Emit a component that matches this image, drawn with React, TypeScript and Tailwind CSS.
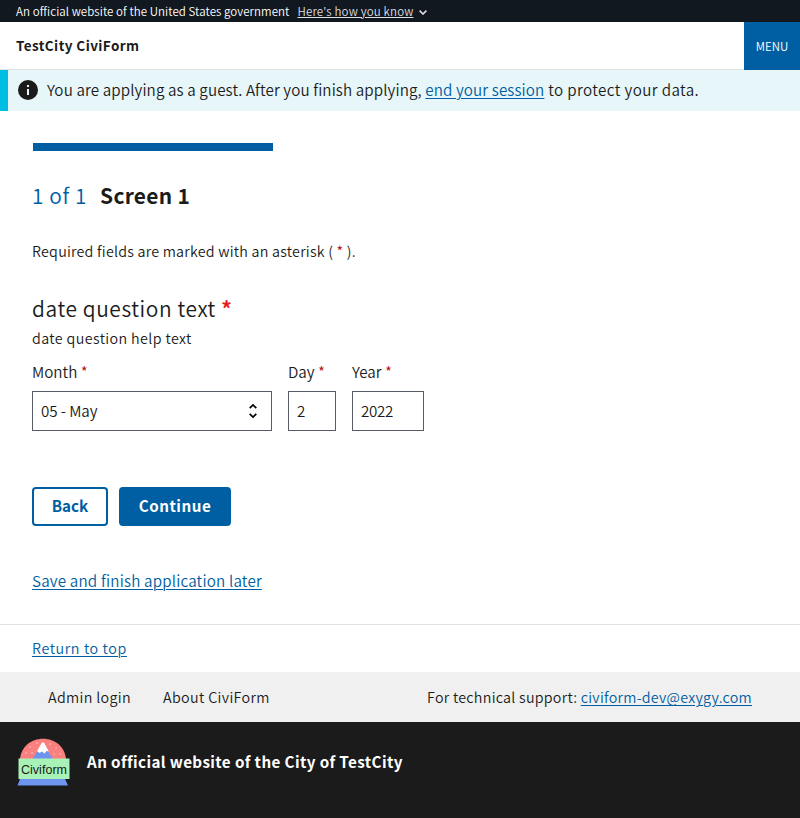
import React from "react";

const link = "text-[#005ea2] underline decoration-1 underline-offset-[2px]";

function Required({ className = "text-[#b50909]" }: { className?: string }) {
  return <span className={className}>*</span>;
}

function Banner() {
  return (
    <div className="flex h-[22px] items-center bg-[#11181f] pb-px pt-[2px] pl-4 text-[11.5px] tracking-[0.07px] text-white">
      <span>An official website of the United States government</span>
      <a
        href="#"
        className="ml-2 tracking-[0.17px] text-[#dcdee0] underline decoration-1 underline-offset-[1px]"
      >
        Here's how you know
      </a>
      <svg className="ml-[6px] mt-[2px] h-[5px] w-2" viewBox="0 0 8 5" fill="none" stroke="#dcdee0" strokeWidth="1.6">
        <path d="M.6.6 4 4 7.4.6" />
      </svg>
    </div>
  );
}

function Header() {
  return (
    <header className="flex h-12 bg-white">
      <div className="flex flex-1 items-center border-b border-[#dfe1e2] pl-4 text-[13.5px] font-bold tracking-[0.41px]">
        TestCity CiviForm
      </div>
      <button className="w-14 bg-[#005ea2] pt-[2px] text-[11.5px] text-white">MENU</button>
    </header>
  );
}

function Alert() {
  return (
    <div className="flex h-[41px] items-center border-l-8 border-[#00bde3] bg-[#e7f6f8] pl-[10px] text-[15.2px]">
      <svg className="-mt-px h-5 w-5" viewBox="0 0 20 20">
        <circle cx="10" cy="10" r="10" fill="#1b1b1b" />
        <path d="M9 5h2v2H9zM9 9h2v6H9z" fill="#e7f6f8" />
      </svg>
      <p className="-mt-[2px] ml-[9px] tracking-[0.115px]">
        You are applying as a guest. After you finish applying, <a href="#" className={link}>end your session</a>
        <span className="tracking-[0.4px]"> to protect your data.</span>
      </p>
    </div>
  );
}

function Logo() {
  return (
    <svg className="h-12 w-[53px]" viewBox="0 0 53 48">
      <path d="M3 21C4 9 14 .8 26 .8S48 9 49 21z" fill="#fa8080" />
      <g fill="#fcc">
        <circle cx="13" cy="9" r=".8" />
        <circle cx="20" cy="5" r=".8" />
        <circle cx="9" cy="15" r=".8" />
        <circle cx="15" cy="15" r=".8" />
        <circle cx="33" cy="6" r=".8" />
        <circle cx="39" cy="10" r=".8" />
        <circle cx="43" cy="16" r=".8" />
        <circle cx="37" cy="16" r=".8" />
      </g>
      <path d="M15.500 21 25.500 5 36 21z" fill="#6d94ee" />
      <path d="M20 13 25 4.500h2L31.800 13.500 29.500 13 27.500 15.500 25 13.500 22.500 15z" fill="#fff" />
      <path d="M3 41H48L51 47.500H.5z" fill="#6d94ee" />
      <path d="M1.500 20.500H52.500V41H1.500z" fill="#a9f2b7" />
      <text x="4" y="35.500" fontSize="12.500" fontWeight="400" textLength="46" fontFamily="Liberation Sans, sans-serif" fill="#1b1b1b">
        Civiform
      </text>
    </svg>
  );
}

function Field({ label, width, children }: { label: string; width: string; children: React.ReactNode }) {
  return (
    <label className={width}>
      <span className="block h-6 leading-6">
        {label} <Required />
      </span>
      <span className="mt-2 flex h-10 items-center justify-between border border-[#565c65] bg-white px-2">
        {children}
      </span>
    </label>
  );
}

export default function App() {
  return (
    <div className="min-h-[818px] bg-white font-['Noto_Sans_CJK_SC',sans-serif] font-[350] text-[#1b1b1b]">
      <Banner />
      <Header />
      <Alert />
      <main className="px-8 pt-8">
        <div className="ml-px h-2 w-60 bg-[#005ea2]" />
        <h1 className="mt-6 h-10 text-[20.9px] font-bold leading-10 tracking-[0.3px]">
          <span className="mr-[13px] font-[350] tracking-[0.6px] text-[#005ea2]">1 of 1</span>Screen 1
        </h1>
        <p className="mt-6 h-6 text-[14.3px] leading-6 tracking-[0.23px]">
          Required fields are marked with an asterisk ( <Required /> ).
        </p>
        <h2 className="mt-[29px] h-8 text-[20.9px] font-[350] leading-8 tracking-[0.6px]">
          date question text <Required className="font-bold text-[#e52020]" />
        </h2>
        <p className="mt-0.5 h-6 text-[14.3px] leading-6 tracking-[0.38px]">date question help text</p>
        <div className="mt-[9px] flex gap-4 text-[15.2px]">
          <Field label="Month" width="w-60">
            <span className="pb-[2px] tracking-[-0.1px]">05 - May</span>
            <svg className="mr-[6px] h-4 w-2" viewBox="0 0 8 16" fill="none" stroke="#000" strokeWidth="1.7">
              <path d="M.7 5.200 4 2l3.300 3.200M.7 10.800 4 14l3.300-3.200" />
            </svg>
          </Field>
          <Field label="Day" width="w-12">
            <span className="pb-[2px]">2</span>
          </Field>
          <Field label="Year" width="w-[72px]">
            <span className="pb-[2px] tracking-[-0.3px]">2022</span>
          </Field>
        </div>
        <div className="mt-14 flex h-[39px] gap-[11px] text-[15.2px] font-bold">
          <button className="w-[76px] rounded border-2 border-[#005ea2] pb-0.5 leading-none text-[#005ea2]">Back</button>
          <button className="w-28 rounded bg-[#005ea2] pb-0.5 leading-none tracking-[0.5px] text-white">Continue</button>
        </div>
        <p className="mt-[42px] h-6 text-[15.2px] leading-6 tracking-[0.19px]">
          <a href="#" className={link}>Save and finish application later</a>
        </p>
      </main>
      <footer className="mt-8 border-t border-[#dfe1e2]">
        <p className="mb-3 ml-8 mt-[11px] h-6 text-[14.3px] leading-6 tracking-[0.61px]">
          <a href="#" className={link}>Return to top</a>
        </p>
        <nav className="flex h-[50px] items-center bg-[#f0f0f0] px-12 text-[14.3px] tracking-[0.34px]">
          <span>Admin login</span>
          <span className="ml-8">About CiviForm</span>
          <span className="ml-auto tracking-[0.26px]">
            For technical support: <a href="#" className={link}>civiform-dev@exygy.com</a>
          </span>
        </nav>
        <div className="flex h-24 bg-[#1b1b1b] pl-[17px] pt-4 text-[15.2px] font-bold text-white">
          <Logo />
          <span className="ml-[17px] h-12 leading-[46px] tracking-[0.39px]">An official website of the City of TestCity</span>
        </div>
      </footer>
    </div>
  );
}
